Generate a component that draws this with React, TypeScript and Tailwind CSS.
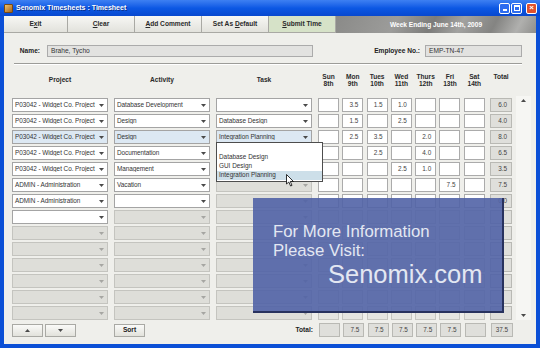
import React from 'react';

type Kind = 'white' | 'blue' | 'off';

interface Row {
  project: string;
  activity: string;
  task: string;
  kinds: [Kind, Kind, Kind];
  hours: string[];
  hoursOn: boolean;
  total: string;
}

const DAYS = [
  ['Sun', '8th'],
  ['Mon', '9th'],
  ['Tues', '10th'],
  ['Wed', '11th'],
  ['Thurs', '12th'],
  ['Fri', '13th'],
  ['Sat', '14th'],
];

const WP = 'P03042 - Widget Co. Project';
const ADMIN = 'ADMIN - Administration';
const none = ['', '', '', '', '', '', ''];

const offRow: Row = { project: '', activity: '', task: '', kinds: ['off', 'off', 'off'], hours: none, hoursOn: false, total: '' };

const rows: Row[] = [
  { project: WP, activity: 'Database Development', task: '', kinds: ['white', 'white', 'white'], hours: ['', '3.5', '1.5', '1.0', '', '', ''], hoursOn: true, total: '6.0' },
  { project: WP, activity: 'Design', task: 'Database Design', kinds: ['white', 'white', 'white'], hours: ['', '1.5', '', '2.5', '', '', ''], hoursOn: true, total: '4.0' },
  { project: WP, activity: 'Design', task: 'Integration Planning', kinds: ['blue', 'blue', 'blue'], hours: ['', '2.5', '3.5', '', '2.0', '', ''], hoursOn: true, total: '8.0' },
  { project: WP, activity: 'Documentation', task: '', kinds: ['white', 'white', 'white'], hours: ['', '', '2.5', '', '4.0', '', ''], hoursOn: true, total: '6.5' },
  { project: WP, activity: 'Management', task: '', kinds: ['white', 'white', 'white'], hours: ['', '', '', '2.5', '1.0', '', ''], hoursOn: true, total: '3.5' },
  { project: ADMIN, activity: 'Vacation', task: '', kinds: ['white', 'white', 'off'], hours: ['', '', '', '', '', '7.5', ''], hoursOn: true, total: '7.5' },
  { project: ADMIN, activity: '', task: '', kinds: ['white', 'white', 'off'], hours: none, hoursOn: true, total: '0.0' },
  { project: '', activity: '', task: '', kinds: ['white', 'off', 'off'], hours: none, hoursOn: false, total: '' },
  offRow, offRow, offRow, offRow, offRow, offRow,
];

const dayTotals = ['', '7.5', '7.5', '7.5', '7.5', '7.5', ''];

function Arrow({ up = false, dim = false }: { up?: boolean; dim?: boolean }) {
  return (
    <svg width="5" height="3" viewBox="0 0 5 3" className={up ? 'rotate-180' : ''}>
      <path d="M0 0 L5 0 L2.5 3 Z" fill={dim ? '#a6a6a2' : '#4a4a4a'} />
    </svg>
  );
}

function Combo({ text, kind }: { text: string; kind: Kind }) {
  const bg = kind === 'blue' ? 'bg-[#dce8f3]' : kind === 'off' ? 'bg-[#deded9]' : 'bg-white';
  const border = kind === 'off' ? 'border-[#c4c4bf]' : 'border-[#a4a4a4]';
  return (
    <div className={`flex h-[14px] w-[96px] items-center border ${border} ${bg}`}>
      <span className="flex-1 overflow-hidden whitespace-nowrap pl-[2px] text-[6.4px] leading-none tracking-[-0.05px] text-[#333]">{text}</span>
      <span className="flex h-full w-[11px] shrink-0 items-center justify-center">
        <Arrow dim={kind === 'off'} />
      </span>
    </div>
  );
}

function Box({ value, tone }: { value: string; tone: 'white' | 'gray' | 'off' }) {
  const bg = tone === 'white' ? 'bg-white border-[#ababab]' : tone === 'gray' ? 'bg-[#dfdfdb] border-[#b9b9b4]' : 'bg-[#e5e5e1] border-[#c6c6c1]';
  return (
    <div className={`flex h-[14px] items-center justify-end border pr-[4px] text-[6.4px] leading-none text-[#444] ${bg}`}>
      {value}
    </div>
  );
}

function DayCells({ values, tone, total }: { values: string[]; tone: 'white' | 'gray' | 'off'; total: string }) {
  return (
    <div className="ml-[6px] flex">
      {values.map((v, i) => (
        <div key={i} className="w-[24.3px]">
          <div className="w-[21px]">
            <Box value={v} tone={tone} />
          </div>
        </div>
      ))}
      <div className="ml-[2px] w-[22px]">
        <Box value={total} tone="gray" />
      </div>
    </div>
  );
}

function ToolButton({ label, u, green = false, w }: { label: string; u: number; green?: boolean; w: string }) {
  return (
    <div
      className={`flex h-full items-center justify-center border-r border-b border-[#a9a9a4] text-[6.6px] font-bold text-[#2a2a2a] ${w} ${
        green ? 'bg-[#d6e2c8]' : 'bg-gradient-to-b from-[#f7f7f4] to-[#e2e2dc]'
      }`}
    >
      <span className="whitespace-pre">
        {label.slice(0, u)}
        <span className="underline">{label[u]}</span>
        {label.slice(u + 1)}
      </span>
    </div>
  );
}

export default function App() {
  return (
    <div className="relative h-[348px] w-[540px] overflow-hidden bg-[#0b4fd6] font-['Liberation_Sans',Arial,sans-serif]">
      {/* Title bar */}
      <div className="flex h-[16px] items-center bg-gradient-to-b from-[#3d80f2] via-[#0c58e4] to-[#0848cf] pl-[4px] pr-[3px]">
        <div className="h-[9px] w-[9px] rounded-[1px] border border-[#7a4a10] bg-gradient-to-br from-[#f2c26a] to-[#a3651e]" />
        <span className="ml-[3px] text-[7px] font-bold text-white [text-shadow:1px_1px_0_#0a2f8a]">Senomix Timesheets : Timesheet</span>
        <div className="ml-auto flex gap-[1px]">
          <div className="flex h-[11px] w-[11px] items-end justify-center rounded-[2px] border border-white bg-[#2d6cf0] pb-[2px]">
            <div className="h-[2px] w-[4px] bg-white" />
          </div>
          <div className="flex h-[11px] w-[11px] items-center justify-center rounded-[2px] border border-white bg-[#2d6cf0]">
            <div className="h-[6px] w-[6px] border border-t-2 border-white" />
          </div>
          <div className="ml-[3px] flex h-[11px] w-[11px] items-center justify-center rounded-[2px] border border-white bg-[#e0512c] text-[8px] font-bold leading-none text-white">
            ×
          </div>
        </div>
      </div>

      {/* Window body */}
      <div className="mx-[4px] flex h-[328px] flex-col bg-[#efefeb]">
        {/* Toolbar */}
        <div className="flex h-[17px]">
          <ToolButton label="Exit" u={1} w="w-[64px]" />
          <ToolButton label="Clear" u={0} w="w-[67px]" />
          <ToolButton label="Add Comment" u={0} w="w-[67px]" />
          <ToolButton label="Set As Default" u={7} w="w-[67px]" />
          <ToolButton label="Submit Time" u={0} w="w-[67px]" green />
          <div className="flex flex-1 items-center justify-center bg-[linear-gradient(118deg,#8a8a88_0%,#9c9c9a_30%,#7c7c7a_48%,#a2a2a0_62%,#848482_78%,#b0b0ae_90%,#8e8e8c_100%)] text-[6.6px] font-bold text-white">
            Week Ending June 14th, 2009
          </div>
        </div>

        {/* Name row */}
        <div className="mt-[12px] flex h-[12px] items-center">
          <div className="w-[36px] text-right text-[6.6px] font-bold text-[#222]">Name:</div>
          <div className="ml-[7px] flex h-full w-[266px] items-center border border-[#ababab] bg-[#e2e2e0] pl-[3px] text-[6.6px] text-[#333]">
            Brahe, Tycho
          </div>
          <div className="w-[107px] text-right text-[6.6px] font-bold text-[#222]">Employee No.:</div>
          <div className="ml-[5px] flex h-full w-[97px] items-center border border-[#ababab] bg-[#e2e2e0] pl-[3px] text-[6.6px] text-[#333]">
            EMP-TN-47
          </div>
        </div>

        {/* Separator */}
        <div className="ml-[10px] mt-[6px] w-[508px] border-t border-b border-t-[#9c9c98] border-b-white" />

        {/* Column headings */}
        <div className="flex h-[29px] items-center pl-[8px] text-[6.6px] font-bold leading-[7px] text-[#2a2a2a]">
          <div className="w-[96px] text-center">Project</div>
          <div className="ml-[6px] w-[96px] text-center">Activity</div>
          <div className="ml-[6px] w-[96px] text-center">Task</div>
          <div className="ml-[6px] flex">
            {DAYS.map(([d, n]) => (
              <div key={d} className="w-[24.3px]">
                <div className="w-[21px] text-center">
                  {d}
                  <br />
                  {n}
                </div>
              </div>
            ))}
            <div className="ml-[2px] w-[22px] text-center">Total</div>
          </div>
        </div>

        {/* Rows + scrollbar */}
        <div className="mt-[4px] flex">
          <div className="flex flex-col gap-[2px] pl-[8px]">
            {rows.map((r, i) => (
              <div key={i} className="flex">
                <Combo text={r.project} kind={r.kinds[0]} />
                <div className="ml-[6px]">
                  <Combo text={r.activity} kind={r.kinds[1]} />
                </div>
                <div className="ml-[6px]">
                  <Combo text={r.task} kind={r.kinds[2]} />
                </div>
                <DayCells values={r.hours} tone={r.hoursOn ? 'white' : 'off'} total={r.total} />
              </div>
            ))}
          </div>
          <div className="-mt-[2px] ml-[4px] flex w-[15px] flex-col items-center justify-between bg-[#f6f6f3] py-[3px]">
            <Arrow up />
            <Arrow />
          </div>
        </div>

        {/* Bottom controls */}
        <div className="mt-[3px] flex h-[14px] items-center pl-[8px]">
          <div className="flex h-[13px] w-[31px] items-center justify-center border border-[#a9a9a4] bg-gradient-to-b from-[#fafaf8] to-[#e2e2dc]">
            <Arrow up />
          </div>
          <div className="ml-[2px] flex h-[13px] w-[31px] items-center justify-center border border-[#a9a9a4] bg-gradient-to-b from-[#fafaf8] to-[#e2e2dc]">
            <Arrow />
          </div>
          <div className="ml-[38px] flex h-[13px] w-[31px] items-center justify-center border border-[#a9a9a4] bg-gradient-to-b from-[#fafaf8] to-[#e2e2dc] text-[6.6px] font-bold text-[#222]">
            Sort
          </div>
          <div className="w-[168px] text-right text-[6.6px] font-bold text-[#222]">Total:</div>
          <DayCells values={dayTotals} tone="gray" total="37.5" />
        </div>
      </div>

      {/* Task dropdown list */}
      <div className="absolute left-[216px] top-[142px] flex w-[107px] flex-col border border-[#4d4d4d] bg-white pb-[1px] text-[6.4px] leading-none text-[#333]">
        <div className="h-[10px]" />
        <div className="flex h-[9px] items-center pl-[2px]">Database Design</div>
        <div className="flex h-[9px] items-center pl-[2px]">GUI Design</div>
        <div className="flex h-[9px] items-center bg-[#cddfe9] pl-[2px]">Integration Planning</div>
      </div>

      {/* Mouse pointer */}
      <svg className="absolute left-[286px] top-[174px]" width="9" height="13" viewBox="0 0 9 13">
        <path d="M0.5 0.5 L0.5 10 L2.8 8 L4.6 12 L6 11.4 L4.3 7.5 L7.5 7.5 Z" fill="#fff" stroke="#000" strokeWidth="0.8" />
      </svg>

      {/* Info overlay */}
      <div className="absolute left-[253px] top-[198px] h-[115px] w-[251px] border-r-2 border-b-2 border-[#28325e] bg-[#5163a6]/90 pt-[26px] text-[#e3e7f2]">
        <div className="pl-[20px] text-[16.8px] leading-none">For More Information</div>
        <div className="mt-[2.5px] pl-[20px] text-[16.8px] leading-none">Please Visit:</div>
        <div className="mt-[2.3px] pl-[75px] text-[25.5px] leading-none">Senomix.com</div>
      </div>
    </div>
  );
}
